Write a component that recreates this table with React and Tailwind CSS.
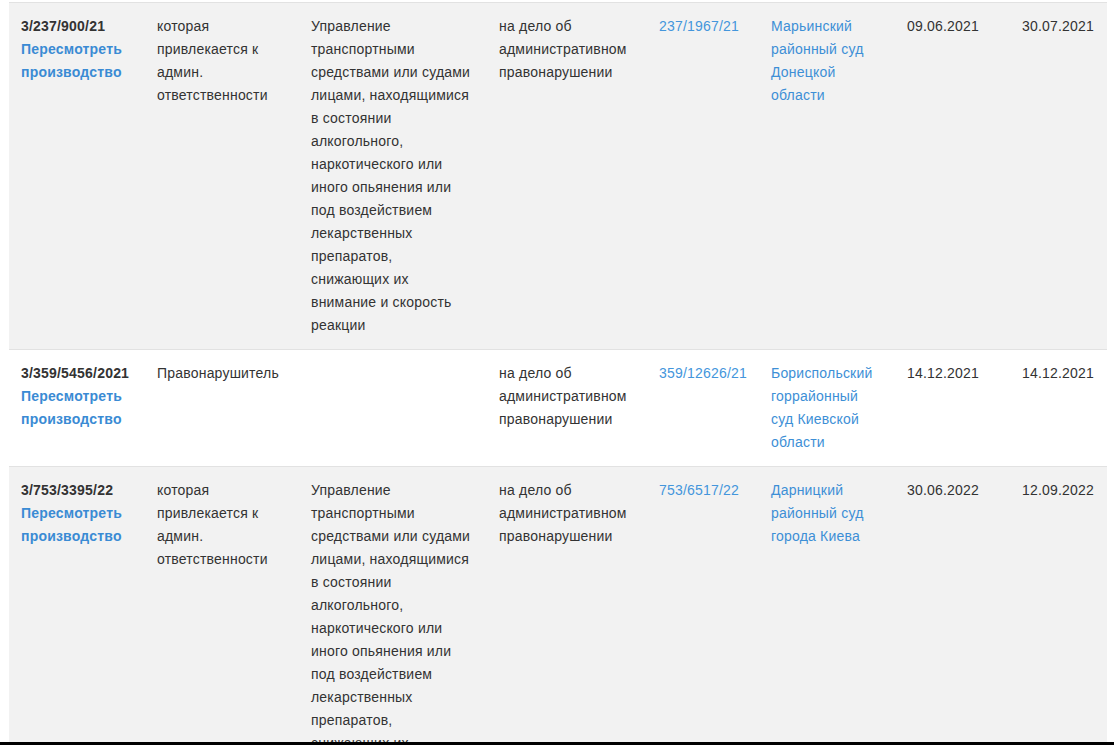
import React from "react";

const cols = [136, 154, 188, 160, 112, 136, 115, 97];

const longArticle =
  "Управление транспортными средствами или судами лицами, находящимися в состоянии алкогольного, наркотического или иного опьянения или под воздействием лекарственных препаратов, снижающих их внимание и скорость реакции";

const rows = [
  {
    num: "3/237/900/21",
    role: "которая привлекается к админ. ответственности",
    article: longArticle,
    kind: "на дело об административном правонарушении",
    caseNo: "237/1967/21",
    court: "Марьинский районный суд Донецкой области",
    start: "09.06.2021",
    end: "30.07.2021",
  },
  {
    num: "3/359/5456/2021",
    role: "Правонарушитель",
    article: "",
    kind: "на дело об административном правонарушении",
    caseNo: "359/12626/21",
    court: "Бориспольский горрайонный суд Киевской области",
    start: "14.12.2021",
    end: "14.12.2021",
  },
  {
    num: "3/753/3395/22",
    role: "которая привлекается к админ. ответственности",
    article: longArticle,
    kind: "на дело об административном правонарушении",
    caseNo: "753/6517/22",
    court: "Дарницкий районный суд города Киева",
    start: "30.06.2022",
    end: "12.09.2022",
  },
];

const App = () => {
  return (
    <div
      className="h-[745px] w-[1114px] flex flex-col overflow-hidden bg-white text-[14px] leading-[23px] tracking-[0.2px] text-[#333333]"
      style={{ fontFamily: '"Liberation Sans", Arial, sans-serif' }}
    >
      <div className="flex-1 overflow-hidden pt-[2px]">
        <table className="table-fixed border-collapse w-[1098px] ml-[9px]">
          <colgroup>
            {cols.map((w, i) => (
              <col key={i} style={{ width: w }} />
            ))}
          </colgroup>
          <tbody>
            {rows.map((r, idx) => (
              <tr
                key={r.num}
                className={`border-t border-[#e2e2e2] align-top ${
                  idx % 2 === 0 ? "bg-[#f2f2f2]" : "bg-white"
                }`}
              >
                <td className="pl-3 pr-[14px] py-3 whitespace-nowrap">
                  <div className="font-bold">{r.num}</div>
                  <a href="#" className="font-bold text-[#3a8bd4]">
                    Пересмотреть
                    <br />
                    производство
                  </a>
                </td>
                <td className="pl-3 pr-[14px] py-3">{r.role}</td>
                <td className="pl-3 pr-[14px] py-3">{r.article}</td>
                <td className="pl-3 pr-[14px] py-3">{r.kind}</td>
                <td className="pl-3 pr-[14px] py-3 whitespace-nowrap">
                  <a href="#" className="text-[#4496dc]">
                    {r.caseNo}
                  </a>
                </td>
                <td className="pl-3 pr-[14px] py-3">
                  <a href="#" className="text-[#3d8fd6]">
                    {r.court}
                  </a>
                </td>
                <td className="pl-3 pr-[14px] py-3">{r.start}</td>
                <td className="pl-3 pr-[14px] py-3">{r.end}</td>
              </tr>
            ))}
          </tbody>
        </table>
      </div>
      <div className="h-[3px] bg-black shrink-0" />
    </div>
  );
};

export default App;
